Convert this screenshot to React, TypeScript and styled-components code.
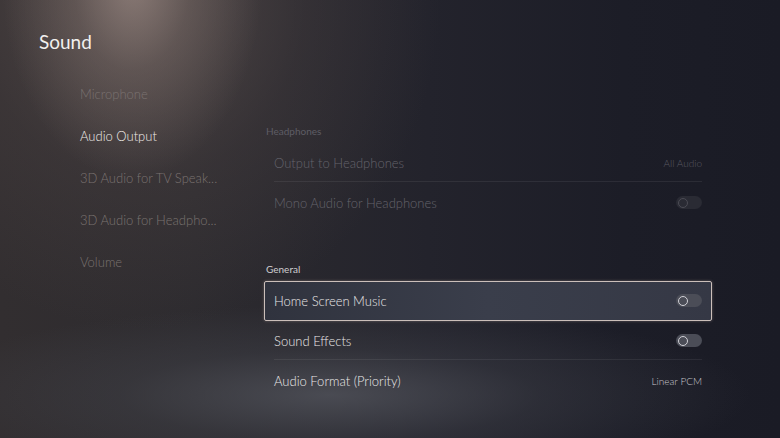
import styled, { createGlobalStyle } from "styled-components"

const GlobalStyle = createGlobalStyle`
  html, body {
    margin: 0;
    padding: 0;
    background: #1b1c26;
  }
  * {
    box-sizing: border-box;
  }
`

const Screen = styled.div`
  width: 780px;
  height: 438px;
  overflow: hidden;
  font-family: Lato, "Open Sans", sans-serif;
  font-weight: 300;
  color: #e6e4e2;
  background:
    radial-gradient(ellipse 130px 200px at 132px -20px, rgba(175, 155, 148, 0.6) 0%, rgba(150, 132, 126, 0.3) 45%, rgba(120, 105, 100, 0) 100%),
    radial-gradient(ellipse 300px 330px at 140px 0px, rgba(105, 92, 88, 0.6) 0%, rgba(80, 70, 70, 0.3) 55%, rgba(60, 55, 58, 0) 100%),
    radial-gradient(ellipse 420px 90px at 330px 395px, rgba(85, 87, 95, 0.75) 0%, rgba(70, 72, 80, 0.35) 50%, rgba(60, 60, 70, 0) 100%),
    linear-gradient(90deg, #322e30 0%, #2d2b2f 25%, #23232c 55%, #1c1d27 80%, #1a1b25 100%);
`

const Header = styled.h1`
  margin: 0;
  padding: 28px 0 0 39px;
  height: 73px;
  font-size: 19px;
  font-weight: 400;
  line-height: 28px;
  color: #f2f0ee;
`

const Body = styled.div`
  display: flex;
`

const Sidebar = styled.nav`
  width: 264px;
  padding-left: 80px;
  display: flex;
  flex-direction: column;
`

const NavItem = styled.div<{ $active?: boolean }>`
  height: 42px;
  line-height: 42px;
  font-size: 13px;
  white-space: nowrap;
  color: ${p => (p.$active ? "#efece9" : "#7a7270")};
`

const Main = styled.main`
  width: 448px;
  padding-top: 48px;
  display: flex;
  flex-direction: column;
  gap: 36px;
`

const Section = styled.section`
  display: flex;
  flex-direction: column;
`

const SectionLabel = styled.div<{ $dim?: boolean }>`
  padding-left: 2px;
  height: 22px;
  line-height: 21px;
  font-size: 10px;
  font-weight: 400;
  color: ${p => (p.$dim ? "#5e5d65" : "#cfcdd0")};
`

const Row = styled.div<{ $focused?: boolean }>`
  height: 40px;
  padding: 0 9px;
  border-radius: 2px;
  border: 1.5px solid ${p => (p.$focused ? "#cbbfba" : "transparent")};
  background: ${p => (p.$focused ? "linear-gradient(90deg, #30333e 0%, #3a3e4b 50%, #353845 100%)" : "transparent")};
  box-shadow: ${p => (p.$focused ? "0 0 3px rgba(200, 180, 175, 0.4)" : "none")};
`

const RowInner = styled.div<{ $line?: boolean }>`
  height: 100%;
  display: flex;
  align-items: center;
  justify-content: space-between;
  border-bottom: 1px solid ${p => (p.$line ? "rgba(255, 255, 255, 0.07)" : "transparent")};
`

const Label = styled.span<{ $dim?: boolean }>`
  font-size: 13px;
  color: ${p => (p.$dim ? "#64636b" : "#eae8e8")};
`

const Value = styled.span<{ $dim?: boolean }>`
  font-size: 10px;
  color: ${p => (p.$dim ? "#5a5961" : "#c8c7cc")};
`

const Toggle = styled.div<{ $dim?: boolean }>`
  width: 26px;
  height: 13px;
  border-radius: 7px;
  background: ${p => (p.$dim ? "#2a2b34" : "#4b4d57")};
  position: relative;
  &::after {
    content: "";
    position: absolute;
    left: 2px;
    top: 1.5px;
    width: 10px;
    height: 10px;
    border-radius: 50%;
    border: 1px solid ${p => (p.$dim ? "#4c4c55" : "#d0d0d6")};
    box-sizing: border-box;
  }
`

type Setting = {
  label: string
  value?: string
  toggle?: boolean
  dim?: boolean
  focused?: boolean
  line?: boolean
}

const headphones: Setting[] = [
  { label: "Output to Headphones", value: "All Audio", dim: true, line: true },
  { label: "Mono Audio for Headphones", toggle: true, dim: true },
]

const general: Setting[] = [
  { label: "Home Screen Music", toggle: true, focused: true },
  { label: "Sound Effects", toggle: true, line: true },
  { label: "Audio Format (Priority)", value: "Linear PCM" },
]

const navItems = ["Microphone", "Audio Output", "3D Audio for TV Speak...", "3D Audio for Headpho...", "Volume"]

const SettingRow = ({ s }: { s: Setting }) => (
  <Row $focused={s.focused}>
    <RowInner $line={s.line}>
      <Label $dim={s.dim}>{s.label}</Label>
      {s.value && <Value $dim={s.dim}>{s.value}</Value>}
      {s.toggle && <Toggle $dim={s.dim} />}
    </RowInner>
  </Row>
)

const App = () => {
  return (
    <Screen>
      <GlobalStyle />
      <Header>Sound</Header>
      <Body>
        <Sidebar>
          {navItems.map(item => (
            <NavItem key={item} $active={item === "Audio Output"}>
              {item}
            </NavItem>
          ))}
        </Sidebar>
        <Main>
          <Section>
            <SectionLabel $dim>Headphones</SectionLabel>
            {headphones.map(s => (
              <SettingRow key={s.label} s={s} />
            ))}
          </Section>
          <Section>
            <SectionLabel>General</SectionLabel>
            {general.map(s => (
              <SettingRow key={s.label} s={s} />
            ))}
          </Section>
        </Main>
      </Body>
    </Screen>
  )
}

export default App
